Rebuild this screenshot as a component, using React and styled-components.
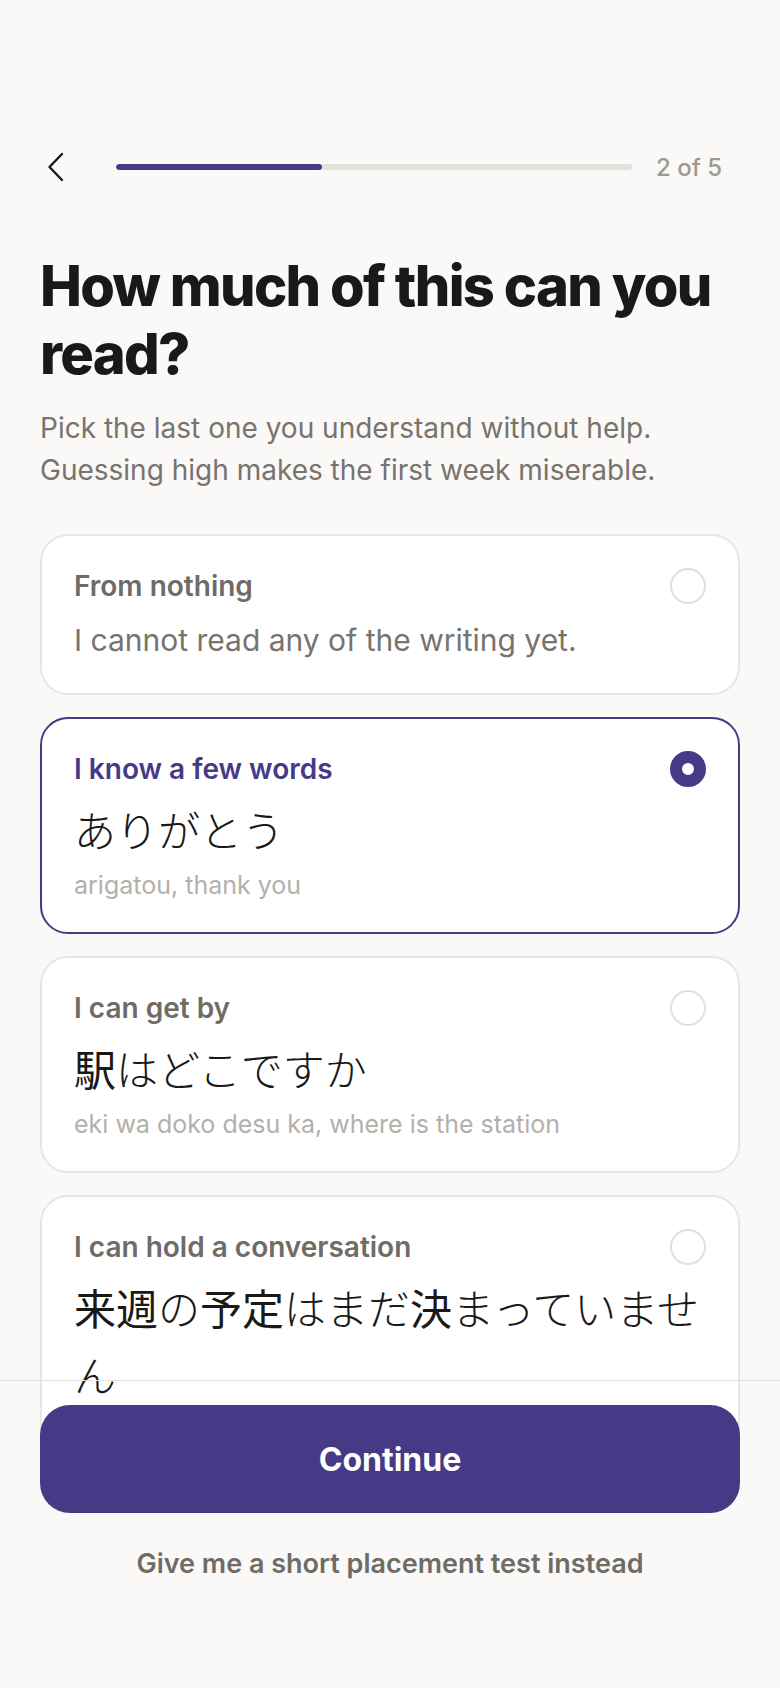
import React from "react";
import styled, { createGlobalStyle } from "styled-components";

const PURPLE = "#463a87";

const GlobalStyle = createGlobalStyle`
  html, body { margin: 0; padding: 0; background: #faf9f7; }
  body { font-family: Inter, "Noto Sans CJK JP", sans-serif; -webkit-font-smoothing: antialiased; }
  * { box-sizing: border-box; }
`;

const Page = styled.div`
  position: relative;
  min-height: 100vh;
  background: #faf9f7;
  overflow: hidden;
`;

const Content = styled.main`
  display: flex;
  flex-direction: column;
  padding: 140px 40px 0;
`;

const Header = styled.header`
  display: flex;
  align-items: center;
  height: 54px;
`;

const BackButton = styled.button`
  display: flex;
  align-items: center;
  justify-content: flex-start;
  width: 44px;
  height: 44px;
  padding: 0;
  margin-right: 32px;
  border: none;
  background: none;
  color: #1a1917;
  cursor: pointer;
`;

const Track = styled.div`
  flex: 1;
  height: 6px;
  border-radius: 3px;
  background: #e3e1de;
  overflow: hidden;
`;

const Fill = styled.div`
  height: 100%;
  border-radius: 3px;
  background: ${PURPLE};
`;

const Count = styled.span`
  width: 84px;
  margin-left: 24px;
  font-size: 24px;
  font-weight: 500;
  color: #9c9893;
`;

const Title = styled.h1`
  margin: 58px 0 0;
  font-size: 56px;
  line-height: 68px;
  font-weight: 800;
  letter-spacing: -0.03em;
  color: #1a1917;
`;

const Subtitle = styled.p`
  margin: 19px 0 0;
  font-size: 28px;
  line-height: 42px;
  color: #77736e;
`;

const Options = styled.div`
  display: flex;
  flex-direction: column;
  gap: 22px;
  margin-top: 43px;
`;

const Card = styled.div`
  display: flex;
  flex-direction: column;
  gap: 8px;
  padding: 32px;
  background: #fff;
  border: 2px solid ${(p) => (p.$selected ? PURPLE : "#e8e6e3")};
  border-radius: 28px;
  cursor: pointer;
`;

const TopRow = styled.div`
  display: flex;
  justify-content: space-between;
  align-items: flex-start;
`;

const Label = styled.span`
  font-size: 28px;
  line-height: 36px;
  font-weight: 600;
  color: ${(p) => (p.$selected ? PURPLE : "#6f6b66")};
`;

const Radio = styled.span`
  flex-shrink: 0;
  width: 36px;
  height: 36px;
  border-radius: 50%;
  background: #fff;
  border: ${(p) => (p.$selected ? `12px solid ${PURPLE}` : "2px solid #e2e0dd")};
`;

const Description = styled.p`
  margin: 7px 0 0;
  font-size: 30px;
  line-height: 42px;
  color: #77736e;
`;

const Japanese = styled.p`
  margin: 0;
  font-family: "Noto Sans CJK JP", sans-serif;
  font-size: 42px;
  line-height: 67px;
  font-weight: 300;
  color: #1a1917;
`;

const Kanji = styled.span`
  font-weight: 400;
`;

const Romaji = styled.p`
  margin: 0;
  font-size: 25px;
  line-height: 30px;
  color: #b3b0ab;
`;

const Footer = styled.footer`
  position: absolute;
  left: 0;
  right: 0;
  bottom: 0;
  display: flex;
  flex-direction: column;
  align-items: stretch;
  padding: 24px 40px 104px;
  border-top: 1px solid #e3e1de;
`;

const PrimaryButton = styled.button`
  height: 108px;
  border: none;
  border-radius: 30px;
  background: ${PURPLE};
  color: #fff;
  font-family: Inter, sans-serif;
  font-size: 32px;
  font-weight: 700;
  cursor: pointer;
`;

const TextButton = styled.button`
  margin-top: 31px;
  padding: 0;
  border: none;
  background: none;
  font-family: Inter, sans-serif;
  font-size: 27px;
  line-height: 40px;
  font-weight: 600;
  color: #6f6b66;
  cursor: pointer;
`;

const ChevronLeft = () => (
  <svg width="24" height="32" viewBox="0 0 24 32" fill="none">
    <polyline
      points="22,3 9.5,16 22,29"
      stroke="currentColor"
      strokeWidth="2.4"
      strokeLinecap="round"
      strokeLinejoin="round"
    />
  </svg>
);

const renderJp = (parts) =>
  parts.map((p, i) => (p.k ? <Kanji key={i}>{p.t}</Kanji> : <React.Fragment key={i}>{p.t}</React.Fragment>));

const options = [
  { label: "From nothing", description: "I cannot read any of the writing yet." },
  { label: "I know a few words", jp: [{ t: "ありがとう" }], romaji: "arigatou, thank you" },
  {
    label: "I can get by",
    jp: [{ t: "駅", k: true }, { t: "はどこですか" }],
    romaji: "eki wa doko desu ka, where is the station",
  },
  {
    label: "I can hold a conversation",
    jp: [
      { t: "来週", k: true },
      { t: "の" },
      { t: "予定", k: true },
      { t: "はまだ" },
      { t: "決", k: true },
      { t: "まっていません" },
    ],
    romaji: "raishuu no yotei wa mada kimatte imasen",
  },
];

export default function App() {
  const step = 2;
  const total = 5;
  const selected = 1;
  return (
    <Page>
      <GlobalStyle />
      <Content>
        <Header>
          <BackButton aria-label="Back">
            <ChevronLeft />
          </BackButton>
          <Track>
            <Fill style={{ width: `${(step / total) * 100}%` }} />
          </Track>
          <Count>
            {step} of {total}
          </Count>
        </Header>
        <Title>How much of this can you read?</Title>
        <Subtitle>
          Pick the last one you understand without help.
          <br />
          Guessing high makes the first week miserable.
        </Subtitle>
        <Options>
          {options.map((o, i) => (
            <Card key={o.label} $selected={i === selected}>
              <TopRow>
                <Label $selected={i === selected}>{o.label}</Label>
                <Radio $selected={i === selected} />
              </TopRow>
              {o.description && <Description>{o.description}</Description>}
              {o.jp && <Japanese>{renderJp(o.jp)}</Japanese>}
              {o.romaji && <Romaji>{o.romaji}</Romaji>}
            </Card>
          ))}
        </Options>
      </Content>
      <Footer>
        <PrimaryButton>Continue</PrimaryButton>
        <TextButton>Give me a short placement test instead</TextButton>
      </Footer>
    </Page>
  );
}
